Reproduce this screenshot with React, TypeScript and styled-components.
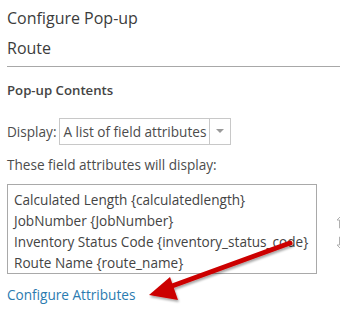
import React from "react";
import styled, { createGlobalStyle } from "styled-components";

const Global = createGlobalStyle`
  html, body { margin: 0; padding: 0; background: #fff; }
  body { font-family: "Open Sans", "Lato", sans-serif; color: #4c4c4c; }
`;

const Page = styled.div`
  position: relative;
  width: 340px;
  height: 312px;
  overflow: hidden;
  padding: 7px 0 0 7px;
  box-sizing: border-box;
`;

const Title = styled.div`
  font-size: 16px;
  line-height: 22px;
  color: #3c3c3c;
`;

const SubTitle = styled.div`
  font-size: 16px;
  line-height: 22px;
  margin-top: 8px;
  color: #3c3c3c;
`;

const Rule = styled.hr`
  border: 0;
  border-top: 1px solid #a8a8a8;
  margin: 7px 0 0 0;
`;

const SectionHead = styled.div`
  font-size: 13.2px;
  font-weight: 600;
  line-height: 18px;
  margin-top: 14px;
  color: #444;
`;

const Row = styled.div`
  display: flex;
  align-items: center;
  margin-top: 19px;
  font-size: 13.6px;
`;

const Label = styled.span`
  margin-right: 3px;
`;

const Select = styled.div`
  display: flex;
  align-items: stretch;
  height: 27px;
  border: 1px solid #c8c8c8;
  box-sizing: border-box;
`;

const SelectText = styled.span`
  display: flex;
  align-items: center;
  padding: 0 3px 0 3px;
  font-size: 13.6px;
`;

const SelectButton = styled.span`
  display: flex;
  align-items: center;
  justify-content: center;
  width: 20px;
  border-left: 1px solid #c8c8c8;
`;

const Info = styled.div`
  font-size: 13.6px;
  margin-top: 11px;
  line-height: 18px;
`;

const ListRow = styled.div`
  display: flex;
  align-items: flex-start;
  margin-top: 10px;
`;

const ListBox = styled.div`
  flex: 0 0 auto;
  width: 310px;
  height: 90px;
  border: 1px solid #a9a9a9;
  box-sizing: border-box;
  padding: 4px 0 0 6px;
  font-size: 13.6px;
  line-height: 21px;
  color: #444;
  white-space: nowrap;
  overflow: hidden;
`;

const Movers = styled.div`
  flex: 0 0 auto;
  display: flex;
  flex-direction: column;
  gap: 7px;
  margin: 31px 0 0 19px;
`;

const Link = styled.a`
  display: block;
  margin-top: 11px;
  font-size: 13.6px;
  color: #2b7bb0;
  text-decoration: none;
`;

const Overlay = styled.svg`
  position: absolute;
  left: 0;
  top: 0;
  pointer-events: none;
`;

export default function App() {
  return (
    <>
      <Global />
      <Page>
        <Title>Configure Pop-up</Title>
        <SubTitle>Route</SubTitle>
        <Rule />
        <SectionHead>Pop-up Contents</SectionHead>
        <Row>
          <Label>Display:</Label>
          <Select>
            <SelectText>A list of field attributes</SelectText>
            <SelectButton>
              <svg width="8" height="5" viewBox="0 0 8 5">
                <path d="M0 0 H8 L4 4 Z" fill="#9a9a9a" />
              </svg>
            </SelectButton>
          </Select>
        </Row>
        <Info>These field attributes will display:</Info>
        <ListRow>
          <ListBox>
            <div>Calculated Length {"{calculatedlength}"}</div>
            <div>JobNumber {"{JobNumber}"}</div>
            <div>Inventory Status Code {"{inventory_status_code}"}</div>
            <div>Route Name {"{route_name}"}</div>
          </ListBox>
          <Movers>
            <svg width="10" height="14" viewBox="0 0 10 14">
              <path d="M5 1 L1 5 H3.5 V13 H6.5 V5 H9 Z" fill="none" stroke="#b0b0b0" strokeWidth="1" />
            </svg>
            <svg width="10" height="14" viewBox="0 0 10 14">
              <path d="M5 13 L1 9 H3.5 V1 H6.5 V9 H9 Z" fill="none" stroke="#b0b0b0" strokeWidth="1" />
            </svg>
          </Movers>
        </ListRow>
        <Link href="#">Configure Attributes</Link>
        <Overlay width="340" height="312" viewBox="0 0 340 312">
          <defs>
            <filter id="sh" x="-20%" y="-20%" width="140%" height="140%">
              <feDropShadow dx="1" dy="2" stdDeviation="1.2" floodColor="#000" floodOpacity="0.35" />
            </filter>
          </defs>
          <g filter="url(#sh)">
            <path d="M290 243 L172 286" stroke="#cc0000" strokeWidth="5" strokeLinecap="round" />
            <path d="M149 295 L170 277 L178 300 Z" fill="#cc0000" />
          </g>
        </Overlay>
      </Page>
    </>
  );
}
